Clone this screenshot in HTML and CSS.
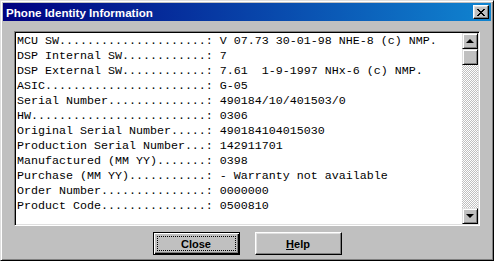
FILE: index.html
```html
<!DOCTYPE html>
<html>
  <head>
    <title>Phone Identity Information</title>
    <link rel="stylesheet" href="styles.css">
  </head>
  <body>
    <div class="window">
      <div class="titlebar">
        <span class="title">Phone Identity Information</span>
        <button class="title-close">
          <svg width="8" height="7" viewBox="0 0 8 7" shape-rendering="crispEdges">
            <path d="M0 0h2v1H0z M6 0h2v1H6z M1 1h2v1H1z M5 1h2v1H5z M2 2h4v1H2z M3 3h2v1H3z M2 4h4v1H2z M1 5h2v1H1z M5 5h2v1H5z M0 6h2v1H0z M6 6h2v1H6z" fill="#000"/>
          </svg>
        </button>
      </div>
      <div class="content">
        <div class="listbox">
          <div class="list-text">MCU SW.....................: V 07.73 30-01-98 NHE-8 (c) NMP.
DSP Internal SW............: 7
DSP External SW............: 7.61  1-9-1997 NHx-6 (c) NMP.
ASIC.......................: G-05
Serial Number..............: 490184/10/401503/0
HW.........................: 0306
Original Serial Number.....: 490184104015030
Production Serial Number...: 142911701
Manufactured (MM YY).......: 0398
Purchase (MM YY)...........: - Warranty not available
Order Number...............: 0000000
Product Code...............: 0500810</div>
          <div class="scrollbar">
            <div class="sb-btn"><span class="arrow-up"></span></div>
            <div class="sb-thumb"></div>
            <div class="sb-track"></div>
            <div class="sb-btn"><span class="arrow-down"></span></div>
          </div>
        </div>
        <div class="buttons">
          <button class="btn default"><span class="focus">Close</span></button>
          <button class="btn"><span class="label"><u>H</u>elp</span></button>
        </div>
      </div>
    </div>
  </body>
</html>
```

FILE: styles.css
```css
body {
  margin: 0;
  background: #c0c0c0;
}
.window {
  width: 494px;
  height: 261px;
  box-sizing: border-box;
  background: #c0c0c0;
  border: 1px solid;
  border-color: #dfdfdf #000 #000 #dfdfdf;
  box-shadow: inset 1px 1px #fff, inset -1px -1px #808080;
  padding: 2px;
  display: flex;
  flex-direction: column;
}
.titlebar {
  height: 18px;
  display: flex;
  align-items: center;
  padding: 0 2px 0 3px;
  background: linear-gradient(90deg, #000080, #1084d0);
}
.title {
  color: #fff;
  font-family: "Liberation Sans", Arial, sans-serif;
  font-weight: bold;
  font-size: 11.6px;
}
.title-close {
  margin-left: auto;
  width: 16px;
  height: 14px;
  padding: 0;
  box-sizing: border-box;
  background: #c0c0c0;
  border: 1px solid;
  border-color: #fff #000 #000 #fff;
  box-shadow: inset -1px -1px #808080, inset 1px 1px #dfdfdf;
  display: flex;
  align-items: center;
  justify-content: center;
}
.title-close svg {
  display: block;
  margin-left: -1px;
}

.content {
  padding: 10px 11px 0;
  display: flex;
  flex-direction: column;
}
.listbox {
  height: 195px;
  box-sizing: border-box;
  border: 1px solid;
  border-color: #808080 #fff #fff #808080;
  box-shadow: inset 1px 1px #000, inset -1px -1px #dfdfdf;
  padding: 1px;
  background: #fff;
  display: flex;
}
.list-text {
  flex: 1;
  white-space: pre;
  overflow: hidden;
  padding: 1px 0 0 1px;
  font-family: "Liberation Mono", "Courier New", monospace;
  font-size: 11.67px;
  line-height: 15px;
  color: #000;
}
.scrollbar {
  width: 16px;
  display: flex;
  flex-direction: column;
}
.sb-btn, .sb-thumb {
  height: 16px;
  box-sizing: border-box;
  background: #c0c0c0;
  border: 1px solid;
  border-color: #dfdfdf #000 #000 #dfdfdf;
  box-shadow: inset 1px 1px #fff, inset -1px -1px #808080;
}
.sb-btn {
  display: flex;
  align-items: center;
  justify-content: center;
}
.sb-track {
  flex: 1;
  background: repeating-conic-gradient(#fff 0 25%, #c0c0c0 0 50%) 0 0 / 2px 2px;
}
.arrow-up, .arrow-down {
  width: 0;
  height: 0;
  border-left: 4px solid transparent;
  border-right: 4px solid transparent;
}
.arrow-up {
  border-bottom: 4px solid #000;
}
.arrow-down {
  border-top: 4px solid #000;
}

.buttons {
  display: flex;
  justify-content: center;
  gap: 15px;
  margin-top: 6px;
}
.btn {
  width: 87px;
  height: 23px;
  box-sizing: border-box;
  padding: 3px;
  background: #c0c0c0;
  border: 1px solid;
  border-color: #fff #000 #000 #fff;
  box-shadow: inset -1px -1px #808080, inset 1px 1px #dfdfdf;
  font-family: "Liberation Sans", Arial, sans-serif;
  font-weight: bold;
  font-size: 11px;
  color: #000;
  display: flex;
}
.btn.default {
  border-color: #000;
  box-shadow: inset 1px 1px #fff, inset -1px -1px #000, inset -2px -2px #808080;
}
.btn .focus, .btn .label {
  flex: 1;
  display: flex;
  align-items: center;
  justify-content: center;
}
.btn .focus {
  border: 1px dotted #000;
}
.btn .label {
  border: 1px solid transparent;
}
```
